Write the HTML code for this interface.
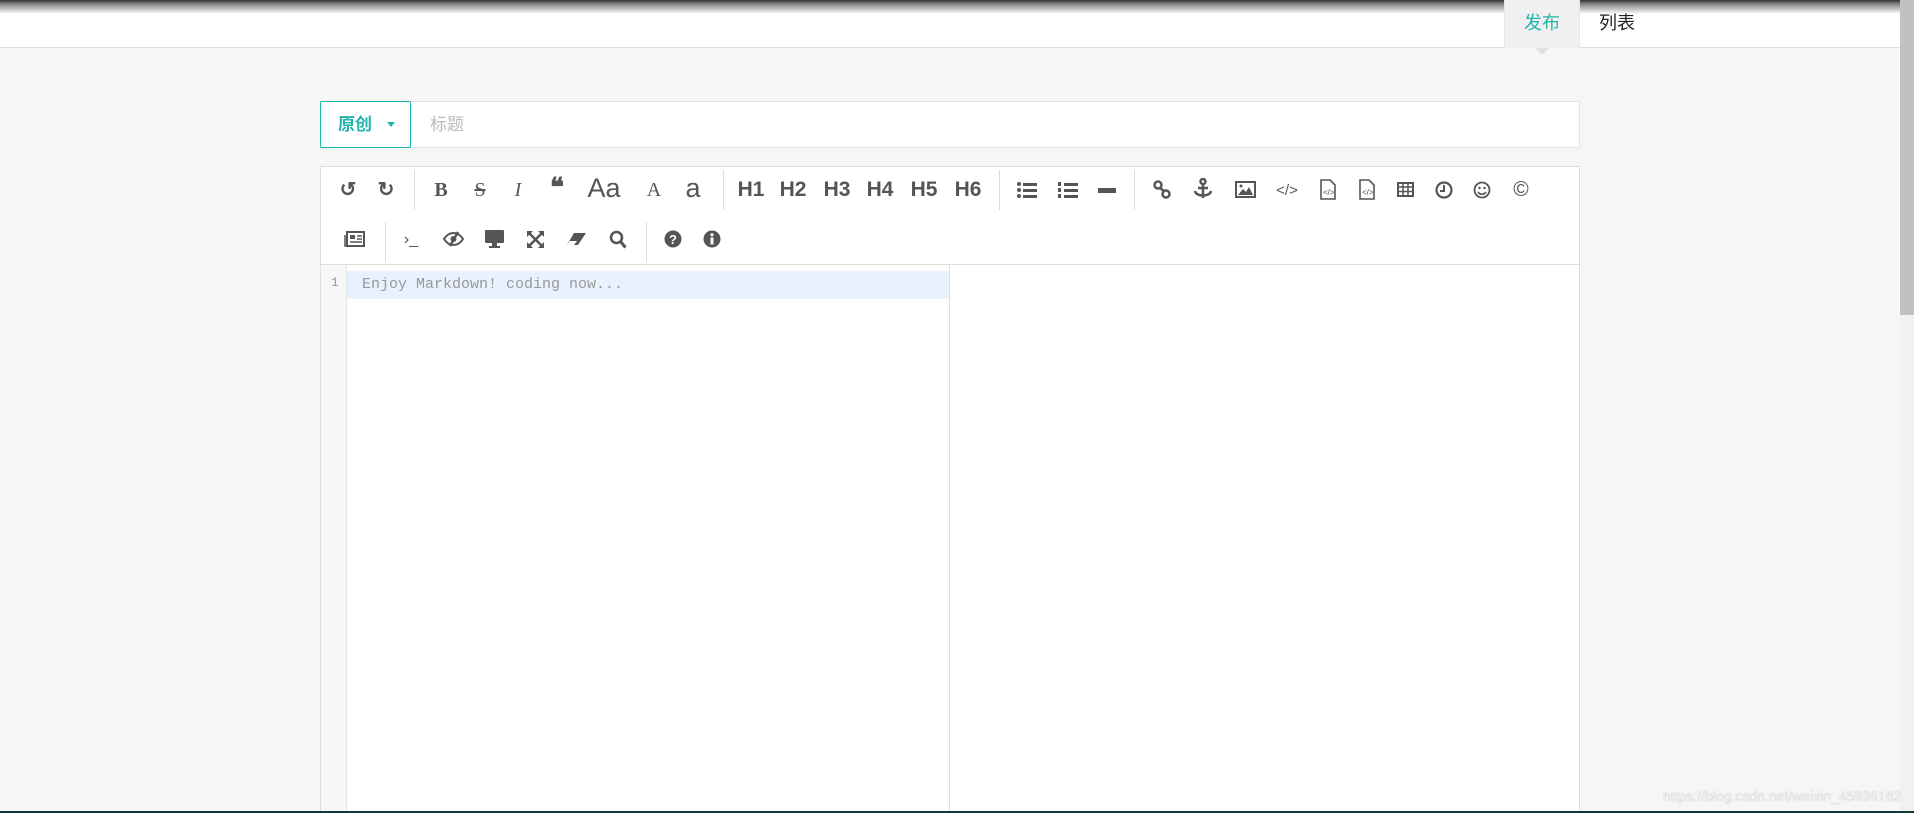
<!DOCTYPE html>
<html style="width:1914px;height:813px;overflow:hidden"><head><meta charset="utf-8"><style>
*{box-sizing:border-box;margin:0;padding:0}
body{width:1914px;height:813px;overflow:hidden;background:#f6f6f6;font-family:"Liberation Sans","Noto Sans CJK SC",sans-serif;position:relative}
.hdr{position:absolute;left:0;top:0;width:1900px;height:48px;background:#fff;border-bottom:1px solid #ddd}
.shadow{position:absolute;left:0;top:0;width:1900px;height:14px;background:linear-gradient(#333,#888 30%,rgba(255,255,255,0))}
.tab{position:absolute;top:0;height:48px;line-height:46px;font-size:18px;padding:0 20px}
.t1{left:1504px;width:76px;background:#f0f0f0;color:#1fb5ad;border-left:1px solid #e5e5e5;border-right:1px solid #e5e5e5;text-align:center;padding:0}
.t2{left:1599px;color:#222;padding:0}
.arrow{position:absolute;left:1535px;top:48px;width:0;height:0;border-left:7px solid transparent;border-right:7px solid transparent;border-top:7px solid #e0e0e0}
.sb{position:absolute;left:1900px;top:0;width:14px;height:813px;background:#f1f1f1}
.thumb{position:absolute;left:1900px;top:0;width:14px;height:315px;background:#c1c1c1}
.title{position:absolute;left:320px;top:101px;width:1260px;height:47px;background:#fff;border:1px solid #e2e2e2}
.btn{position:absolute;left:320px;top:101px;width:91px;height:47px;border:1px solid #1fb5ad;border-radius:2px;background:#fff;color:#1fb5ad;font-weight:bold;font-size:17px;line-height:45px;padding-left:17px}
.btn i{position:absolute;left:66px;top:20px;border-left:4px solid transparent;border-right:4px solid transparent;border-top:5px solid #1fb5ad}
.ph{position:absolute;left:430px;top:101px;line-height:47px;font-size:17px;color:#bbb}
.ed{position:absolute;left:320px;top:166px;width:1260px;height:647px;background:#fff;border:1px solid #ddd;border-bottom:none}
.tb{position:absolute;left:320px;top:264px;width:1260px;height:1px;background:#ddd}
.ic{position:absolute;color:#555;font-size:20px;line-height:24px;transform:translateX(-50%);white-space:nowrap}
.h{font-weight:bold;font-size:21px;font-family:"Liberation Sans",sans-serif}
.sep{position:absolute;width:1px;height:40px;background:#ddd}
.gut{position:absolute;left:321px;top:265px;width:26px;height:548px;background:#f7f7f7;border-right:1px solid #e5e5e5}
.ln{position:absolute;left:331px;top:275px;font-family:"Liberation Mono",monospace;font-size:13px;color:#999}
.hl{position:absolute;left:347px;top:271px;width:602px;height:28px;background:#e8f2fe}
.code{position:absolute;left:362px;top:276px;font-family:"Liberation Mono",monospace;font-size:15px;color:#999}
.split{position:absolute;left:949px;top:265px;width:1px;height:548px;background:#ddd}
.wm{position:absolute;left:1663px;top:788px;font-size:14px;color:#eee;text-shadow:0 0 1px #aaa}
.bot{position:absolute;left:0;top:811px;width:1914px;height:2px;background:#0d3b39}
svg.s{position:absolute}
</style></head><body>
<div class="hdr"></div><div class="shadow"></div>
<div class="tab t1">发布</div><div class="tab t2">列表</div><div class="arrow"></div>
<div class="title"></div>
<div class="btn">原创<i></i></div>
<div class="ph">标题</div>
<div class="ed"></div>
<div class="tb"></div>
<div class="ic" style="left:348px;top:178px;font-weight:bold">↺</div>
<div class="ic" style="left:386px;top:178px;font-weight:bold">↻</div>
<div class="sep" style="left:414px;top:170px"></div>
<div class="ic" style="left:441px;top:178px;font-family:'Liberation Serif',serif;font-weight:bold">B</div>
<div class="ic" style="left:480px;top:178px;font-family:'Liberation Serif',serif;text-decoration:line-through">S</div>
<div class="ic" style="left:518px;top:178px;font-family:'Liberation Serif',serif;font-style:italic">I</div>
<div class="ic" style="left:557px;top:176px;font-family:'Liberation Serif',serif;font-weight:bold;font-size:26px">❝</div>
<div class="ic" style="left:604px;top:176px;font-size:27px">Aa</div>
<div class="ic" style="left:654px;top:178px;font-family:'Liberation Serif',serif">A</div>
<div class="ic" style="left:693px;top:176px;font-size:27px">a</div>
<div class="sep" style="left:723px;top:170px"></div>
<div class="ic h" style="left:751px;top:178px">H1</div>
<div class="ic h" style="left:793px;top:178px">H2</div>
<div class="ic h" style="left:837px;top:178px">H3</div>
<div class="ic h" style="left:880px;top:178px">H4</div>
<div class="ic h" style="left:924px;top:178px">H5</div>
<div class="ic h" style="left:968px;top:178px">H6</div>
<div class="sep" style="left:999px;top:170px"></div>
<svg class="s" style="left:1017px;top:182px" width="20" height="16"><g fill="#555"><circle cx="2" cy="2" r="2"/><circle cx="2" cy="8" r="2"/><circle cx="2" cy="14" r="2"/><rect x="6" y="1" width="14" height="3"/><rect x="6" y="7" width="14" height="3"/><rect x="6" y="13" width="14" height="3"/></g></svg>
<svg class="s" style="left:1058px;top:181px" width="20" height="18"><g fill="#555"><rect x="0" y="1" width="3" height="4"/><rect x="0" y="7" width="3" height="4"/><rect x="0" y="13" width="3" height="4"/><rect x="6" y="2" width="14" height="3"/><rect x="6" y="8" width="14" height="3"/><rect x="6" y="14" width="14" height="3"/></g></svg>
<svg class="s" style="left:1098px;top:188px" width="18" height="5"><rect width="18" height="5" fill="#555"/></svg>
<div class="sep" style="left:1134px;top:170px"></div>
<svg class="s" style="left:1153px;top:180px" width="18" height="20"><g fill="none" stroke="#555" stroke-width="2.5"><circle cx="5" cy="5" r="3.5"/><circle cx="13" cy="14" r="3.5"/><path d="M7 8l4 3"/></g></svg>
<svg class="s" style="left:1193px;top:178px" width="20" height="22"><g fill="none" stroke="#555" stroke-width="2.5"><circle cx="10" cy="3.5" r="2.5"/><path d="M10 6v14M5 10h10M2 13c1 6 15 6 16 0"/></g></svg>
<svg class="s" style="left:1235px;top:181px" width="21" height="17"><rect x="1" y="1" width="19" height="15" fill="none" stroke="#555" stroke-width="2"/><path d="M3 14l5-6 3 3 3-5 4 8z" fill="#555"/><circle cx="6" cy="5" r="1.5" fill="#555"/></svg>
<div class="ic" style="left:1287px;top:179px;font-size:15px">&lt;/&gt;</div>
<svg class="s" style="left:1320px;top:179px" width="16" height="21"><path d="M1 1h9l5 5v14H1z" fill="none" stroke="#555" stroke-width="1.6"/><text x="3" y="16" font-size="8" fill="#555" font-family="Liberation Sans">&lt;/&gt;</text></svg>
<svg class="s" style="left:1359px;top:179px" width="16" height="21"><path d="M1 1h9l5 5v14H1z" fill="none" stroke="#555" stroke-width="1.6"/><text x="3" y="16" font-size="8" fill="#555" font-family="Liberation Sans">&lt;/&gt;</text></svg>
<svg class="s" style="left:1397px;top:182px" width="17" height="15"><rect x="1" y="1" width="15" height="13" fill="none" stroke="#555" stroke-width="2"/><path d="M1 5h15M1 9.5h15M6 1v13M11 1v13" stroke="#555" stroke-width="1.5"/></svg>
<svg class="s" style="left:1435px;top:181px" width="18" height="18"><circle cx="9" cy="9" r="7.5" fill="none" stroke="#555" stroke-width="2.2"/><path d="M9 4v6H5" fill="none" stroke="#555" stroke-width="2"/></svg>
<svg class="s" style="left:1473px;top:181px" width="18" height="18"><circle cx="9" cy="9" r="7.5" fill="none" stroke="#555" stroke-width="1.8"/><circle cx="6.5" cy="7" r="1.2" fill="#555"/><circle cx="11.5" cy="7" r="1.2" fill="#555"/><path d="M5 11c2 3 6 3 8 0" fill="none" stroke="#555" stroke-width="1.6"/></svg>
<div class="ic" style="left:1521px;top:178px;font-size:21px">©</div>
<svg class="s" style="left:344px;top:231px" width="21" height="16"><rect x="3" y="1" width="17" height="14" fill="none" stroke="#555" stroke-width="2"/><path d="M1 4v11h2" fill="none" stroke="#555" stroke-width="1.5"/><rect x="6" y="4" width="5" height="4" fill="#555"/><path d="M13 5h5M13 8h5M6 11h12" stroke="#555" stroke-width="1.5"/></svg>
<div class="sep" style="left:385px;top:222px"></div>
<div class="ic" style="left:411px;top:228px;font-size:16px">›_</div>
<svg class="s" style="left:443px;top:231px" width="21" height="16"><path d="M1 8c5-8 14-8 19 0c-5 8-14 8-19 0z" fill="none" stroke="#555" stroke-width="2"/><circle cx="10.5" cy="8" r="3" fill="#555"/><path d="M15 1L7 15" stroke="#555" stroke-width="2.4"/></svg>
<svg class="s" style="left:484px;top:229px" width="21" height="20"><rect x="1" y="1" width="19" height="13" rx="1" fill="#555"/><rect x="8" y="14" width="5" height="3" fill="#555"/><rect x="5" y="17" width="11" height="2" fill="#555"/></svg>
<svg class="s" style="left:527px;top:231px" width="17" height="17"><g stroke="#555" stroke-width="2.5" fill="#555"><path d="M2 2l13 13M15 2L2 15"/></g><path d="M0 0h6L0 6zM17 0h-6l6 6zM0 17h6L0 11zM17 17h-6l6-6z" fill="#555"/></svg>
<svg class="s" style="left:566px;top:232px" width="21" height="14"><path d="M8 1h12l-8 12H1z" fill="#555"/><path d="M4 9h7l-3 4H1z" fill="#fff"/></svg>
<svg class="s" style="left:609px;top:230px" width="18" height="19"><circle cx="7.5" cy="7.5" r="5.5" fill="none" stroke="#555" stroke-width="2.6"/><path d="M11.5 11.5l5 6" stroke="#555" stroke-width="3"/></svg>
<div class="sep" style="left:646px;top:222px"></div>
<svg class="s" style="left:664px;top:230px" width="18" height="18"><circle cx="9" cy="9" r="8.5" fill="#555"/><text x="9" y="14" font-size="13" font-weight="bold" fill="#fff" text-anchor="middle" font-family="Liberation Sans">?</text></svg>
<svg class="s" style="left:703px;top:230px" width="18" height="18"><circle cx="9" cy="9" r="8.5" fill="#555"/><rect x="7.5" y="7.5" width="3" height="7" fill="#fff"/><circle cx="9" cy="4.8" r="1.6" fill="#fff"/></svg>
<div class="gut"></div>
<div class="hl"></div>
<div class="ln">1</div>
<div class="code">Enjoy Markdown! coding now...</div>
<div class="split"></div>
<div class="sb"></div><div class="thumb"></div>
<div class="wm">https://blog.csdn.net/weixin_45936162</div>
<div class="bot"></div>
</body></html>
